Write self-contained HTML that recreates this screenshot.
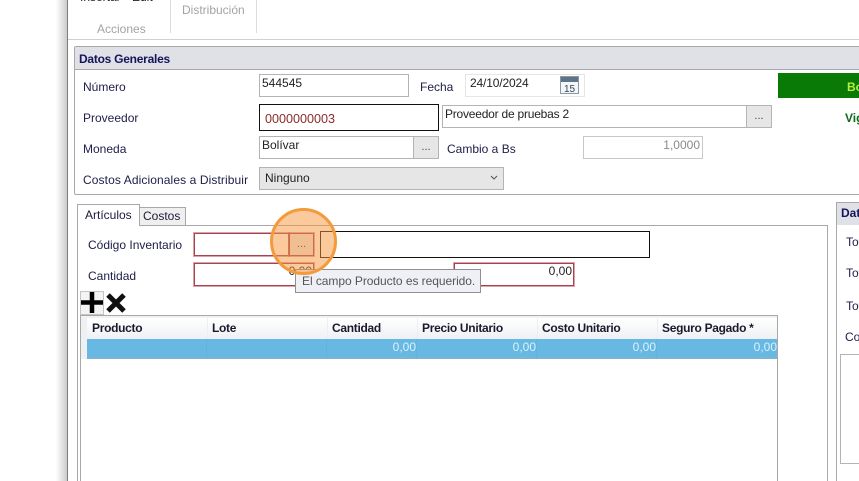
<!DOCTYPE html>
<html><head><meta charset="utf-8"><style>
html,body{margin:0;padding:0;background:#fff}
#p{position:relative;width:859px;height:481px;overflow:hidden;background:#fff;font-family:"Liberation Sans",sans-serif;font-size:12px;color:#1b1b3a}
#p div{position:absolute;box-sizing:border-box;white-space:nowrap}
.l{line-height:14px;color:#20204a}
.i{background:#fff;border:1px solid #b4b4b4;line-height:14px;padding:1px 2px;color:#222}
.b{background:#e6e6e6;border:1px solid #b4b4b4;text-align:center;line-height:20px;font-size:11px;color:#444}
.h{top:318px;height:21px;line-height:20px;font-weight:bold;letter-spacing:-.3px;color:#1a1a2e;background:linear-gradient(#fff,#eef0f3);padding-left:4px;border-left:1px solid #eceef1}
.v{top:339px;height:19px;line-height:16px;color:#d8f2fb;text-align:right;border-right:1px solid #63b2db}
.r{border:1px solid #a8434e;box-shadow:0 0 0 1px rgba(190,100,110,.6);background:#fff}
</style></head><body><div id="p">
<div style="left:56px;top:0;width:11px;height:481px;background:linear-gradient(90deg,rgba(200,200,200,0),rgba(190,190,190,.8))"></div>
<div style="left:67px;top:0;width:1px;height:481px;background:#7d7d7d"></div>
<div style="left:68px;top:39px;width:791px;height:1px;background:#d0d0d0"></div>
<div class="l" style="left:80px;top:-10px;color:#222">Insertar</div>
<div class="l" style="left:132px;top:-10px;color:#222">Edit</div>
<div class="l" style="left:97px;top:22px;color:#a3a3a3">Acciones</div>
<div style="left:170px;top:0;width:1px;height:33px;background:#dcdcdc"></div>
<div style="left:256px;top:0;width:1px;height:33px;background:#dcdcdc"></div>
<div class="l" style="left:182px;top:3px;color:#a3a3a3">Distribución</div>

<div style="left:74px;top:46px;width:800px;height:149px;border:1px solid #a8a8a8;border-radius:2px"></div>
<div style="left:75px;top:47px;width:784px;height:23px;background:#dfe1e6;border-bottom:1px solid #a8a8a8"></div>
<div style="left:79px;top:52px;font-weight:bold;line-height:14px;letter-spacing:-.25px;color:#14145a">Datos Generales</div>

<div class="l" style="left:83px;top:80px">Número</div>
<div class="i" style="left:259px;top:74px;width:150px;height:23px">544545</div>
<div class="l" style="left:420px;top:80px">Fecha</div>
<div class="i" style="left:465px;top:74px;width:120px;height:23px;border-color:#e6e6e6;padding-left:4px;letter-spacing:-.15px">24/10/2024</div>
<svg style="position:absolute;left:560px;top:76px" width="20" height="19"><rect x="0.5" y="0.5" width="18" height="17" fill="#f4f6f8" stroke="#8a97a5"/><rect x="1" y="1" width="17" height="5" fill="#5f7487"/><text x="9.5" y="16" font-size="10" text-anchor="middle" font-family="Liberation Sans" fill="#33465a">15</text></svg>
<div style="left:778px;top:73px;width:81px;height:25px;background:#0a7a07"></div>
<div style="left:847px;top:80px;font-weight:bold;line-height:14px;color:#b8ef3a">Borrador</div>

<div class="l" style="left:83px;top:111px">Proveedor</div>
<div class="i" style="left:259px;top:104px;width:180px;height:27px;border:1px solid #111;color:#8c2a2a;padding:7px 5px;font-size:12.6px">0000000003</div>
<div class="i" style="left:442px;top:105px;width:305px;height:23px;padding:1px 2px;letter-spacing:-.22px">Proveedor de pruebas 2</div>
<div class="b" style="left:746px;top:105px;width:26px;height:23px">...</div>
<div style="left:845px;top:111px;font-weight:bold;line-height:14px;color:#0d6a1a">Vigente</div>

<div class="l" style="left:83px;top:142px">Moneda</div>
<div class="i" style="left:259px;top:136px;width:155px;height:23px">Bolívar</div>
<div class="b" style="left:413px;top:136px;width:26px;height:23px">...</div>
<div class="l" style="left:447px;top:142px">Cambio a Bs</div>
<div class="i" style="left:583px;top:136px;width:120px;height:23px;border-color:#c8c8c8;text-align:right;color:#8a8a8a">1,0000</div>

<div class="l" style="left:83px;top:173px;letter-spacing:.1px">Costos Adicionales a Distribuir</div>
<div class="i" style="left:259px;top:167px;width:245px;height:23px;background:#e6e6e6;padding:3px 5px">Ninguno</div>
<svg style="position:absolute;left:490px;top:175px" width="8" height="6"><path d="M1 1L4 4L7 1" fill="none" stroke="#555" stroke-width="1"/></svg>

<div style="left:77px;top:225px;width:751px;height:270px;border:1px solid #a8a8a8"></div>
<div style="left:77px;top:204px;width:63px;height:22px;border:1px solid #a8a8a8;border-bottom:0;background:#fff;line-height:20px;padding-left:7px">Artículos</div>
<div style="left:139px;top:207px;width:47px;height:19px;border:1px solid #a8a8a8;background:#efefef;line-height:17px;padding-left:3px">Costos</div>

<div class="l" style="left:88px;top:238px">Código Inventario</div>
<div class="r" style="left:194px;top:233px;width:95px;height:23px"></div>
<div class="b r" style="left:289px;top:233px;width:25px;height:23px;background:#e8e8e8;line-height:21px">...</div>
<div style="left:320px;top:231px;width:330px;height:27px;border:1px solid #111;background:#fff"></div>
<div class="l" style="left:88px;top:269px">Cantidad</div>
<div class="r" style="left:194px;top:263px;width:120px;height:23px;text-align:right;line-height:14px;padding:0 1px 0 0;color:#222">0,00</div>
<div class="r" style="left:454px;top:263px;width:120px;height:23px;text-align:right;line-height:14px;padding:0 1px 0 0;color:#222">0,00</div>
<div style="left:295px;top:269px;width:186px;height:24px;background:#eff0f5;border:1px solid #8f8f8f;line-height:23px;padding-left:6px;letter-spacing:-.05px;color:#555">El campo Producto es requerido.</div>

<div style="left:80px;top:291px;width:24px;height:24px;background:#f4f4f4;border:1px solid #c4c4c4"></div>
<svg style="position:absolute;left:80px;top:290px" width="50" height="26"><path d="M12 2V23M1 12.500H23" stroke="#000" stroke-width="4.500" fill="none"/><path d="M28 5L44 21M44 5L28 21" stroke="#111" stroke-width="5" fill="none"/></svg>

<div style="left:80px;top:315px;width:698px;height:170px;border:1px solid #a8a8a8;background:#fff"></div>
<div style="left:81px;top:316px;width:696px;height:2px;background:#f2f2f2"></div>
<div style="left:81px;top:318px;width:6px;height:41px;background:#eef0f3"></div>
<div class="h" style="left:87px;width:120px;border-left:0;padding-left:5px">Producto</div>
<div class="h" style="left:207px;width:120px">Lote</div>
<div class="h" style="left:327px;width:90px">Cantidad</div>
<div class="h" style="left:417px;width:120px">Precio Unitario</div>
<div class="h" style="left:537px;width:120px">Costo Unitario</div>
<div class="h" style="left:657px;width:120px">Seguro Pagado *</div>
<div style="left:87px;top:339px;width:690px;height:20px;background:#67b8e2;border-bottom:2px solid #7fb3cf"></div>
<div class="v" style="left:87px;width:120px"></div>
<div class="v" style="left:207px;width:120px"></div>
<div class="v" style="left:327px;width:90px">0,00</div>
<div class="v" style="left:417px;width:120px">0,00</div>
<div class="v" style="left:537px;width:120px">0,00</div>
<div class="v" style="left:657px;width:120px;border-right:0">0,00</div>

<div style="left:836px;top:202px;width:40px;height:290px;border:1px solid #a8a8a8"></div>
<div style="left:837px;top:203px;width:22px;height:22px;background:#dfe1e6;font-weight:bold;line-height:20px;padding-left:4px;color:#14145a;overflow:hidden">Datos</div>
<div class="l" style="left:846px;top:235px">Total</div>
<div class="l" style="left:846px;top:266px">Total</div>
<div class="l" style="left:846px;top:299px">Total</div>
<div class="l" style="left:845px;top:330px">Costo</div>
<div style="left:840px;top:354px;width:30px;height:110px;border:1px solid #b4b4b4"></div>

<div style="left:270px;top:208px;width:67px;height:67px;border-radius:50%;background:rgba(245,150,60,.5);border:3px solid #f39a3d"></div>
</div></body></html>
